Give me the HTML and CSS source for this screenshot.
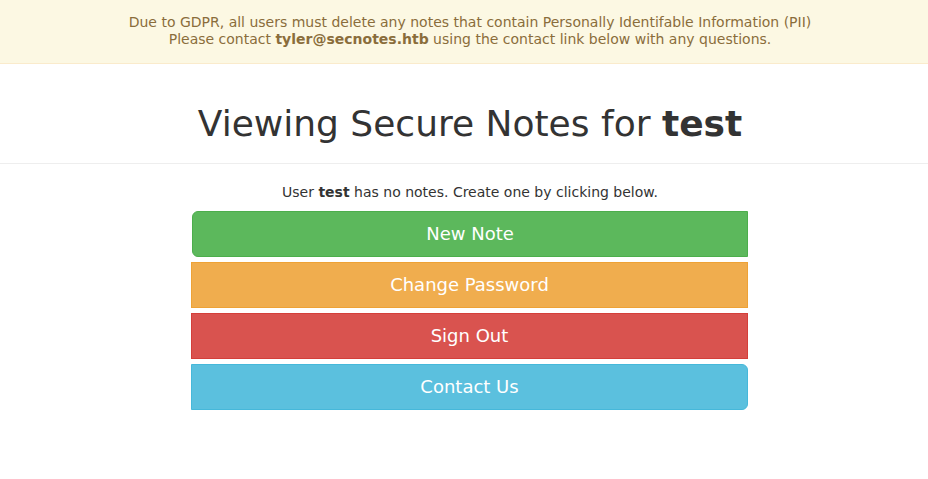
FILE: index.html
```html
<!DOCTYPE html>
<html>
<head>
<meta charset="utf-8">
<link rel="stylesheet" href="styles.css">
</head>
<body>
<div class="banner">
  <div class="banner-inner">Due to GDPR, all users must delete any notes that contain Personally Identifable Information (PII)<br>Please contact <strong>tyler@secnotes.htb</strong> using the contact link below with any questions.</div>
</div>
<div class="page">
  <h1 class="title">Viewing Secure Notes for <strong>test</strong></h1>
</div>
<hr class="rule">
<div class="page">
  <p class="info">User <strong>test</strong> has no notes. Create one by clicking below.</p>
  <div class="actions">
    <a class="btn btn-green btn-first">New Note</a>
    <a class="btn btn-orange">Change Password</a>
    <a class="btn btn-red">Sign Out</a>
    <a class="btn btn-blue btn-last">Contact Us</a>
  </div>
</div>
</body>
</html>
```
FILE: styles.css
```css
html, body {
  margin: 0;
  padding: 0;
  background: #fff;
}
body {
  font-family: "DejaVu Sans", sans-serif;
  font-size: 14px;
  color: #333;
  overflow: hidden;
}
.banner {
  background: #fcf8e3;
  border-bottom: 1px solid #faebcc;
  color: #8a6d3b;
  padding: 14px 0 15px 12px;
}
.banner-inner {
  text-align: center;
  line-height: 17px;
}
.page {
  padding-left: 12px;
  text-align: center;
}
.title {
  margin: 0;
  padding-top: 40px;
  font-size: 36px;
  font-weight: 500;
  line-height: 40px;
  color: #333;
}
.title strong {
  font-weight: bold;
}
.rule {
  border: 0;
  border-top: 1px solid #eee;
  margin: 19px 0 0 0;
}
.info {
  margin: 18px 0 0 0;
  line-height: 20px;
}
.actions {
  width: 556px;
  margin: 9px auto 0;
  display: flex;
  flex-direction: column;
  gap: 5px;
}
.btn {
  display: block;
  box-sizing: border-box;
  height: 46px;
  line-height: 44px;
  font-size: 18px;
  color: #fff;
  text-align: center;
  border: 1px solid transparent;
  cursor: pointer;
}
.btn + .btn {
  margin-left: -1px;
}
.btn-first {
  border-radius: 6px 0 0 6px;
}
.btn-last {
  border-radius: 0 6px 6px 0;
}
.btn-green {
  background: #5cb85c;
  border-color: #4cae4c;
}
.btn-orange {
  background: #f0ad4e;
  border-color: #eea236;
}
.btn-red {
  background: #d9534f;
  border-color: #d43f3a;
}
.btn-blue {
  background: #5bc0de;
  border-color: #46b8da;
}
```
